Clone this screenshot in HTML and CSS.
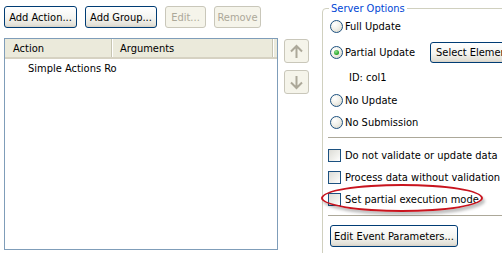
FILE: index.html
```html
<!DOCTYPE html>
<html lang="en">
<head>
  <meta charset="UTF-8" />
  <title>Event Actions</title>
  <link rel="stylesheet" href="styles.css">
</head>
<body>
  <div class="dialog">
    <div class="actions">
      <div class="toolbar">
        <button class="btn w-add">Add Action...</button>
        <button class="btn w-group">Add Group...</button>
        <button class="btn w-edit" disabled>Edit...</button>
        <button class="btn w-remove" disabled>Remove</button>
      </div>
      <div class="table">
        <div class="thead">
          <div class="th col-action">Action</div>
          <div class="th col-args">Arguments</div>
        </div>
        <div class="tr">
          <div class="td col-action"><span class="indent">Simple Actions Ro</span></div>
          <div class="td col-args"></div>
        </div>
      </div>
    </div>

    <div class="movers">
      <button class="btn arrow" disabled>
        <svg width="15" height="15" viewBox="0 0 15 15"><path d="M7.5 14V2M2 7.5L7.5 2L13 7.5" fill="none" stroke="#aca899" stroke-width="2"/></svg>
      </button>
      <button class="btn arrow" disabled>
        <svg width="15" height="15" viewBox="0 0 15 15"><path d="M7.5 1V13M2 7.5L7.5 13L13 7.5" fill="none" stroke="#aca899" stroke-width="2"/></svg>
      </button>
    </div>

    <fieldset class="server">
      <legend>Server Options</legend>
      <div class="opt first"><span class="radio"></span>Full Update</div>
      <div class="opt partial"><span class="radio checked"></span>Partial Update<button class="btn select">Select Elemen</button></div>
      <div class="id-row">ID: col1</div>
      <div class="opt"><span class="radio"></span>No Update</div>
      <div class="opt"><span class="radio"></span>No Submission</div>
      <div class="sep"></div>
      <div class="chk first-chk"><span class="box"></span>Do not validate or update data</div>
      <div class="chk"><span class="box"></span>Process data without validation</div>
      <div class="chk marked"><span class="box"></span>Set partial execution mode<span class="ring"></span></div>
      <div class="sep second"></div>
      <button class="btn params">Edit Event Parameters...</button>
    </fieldset>
  </div>
</body>
</html>
```

FILE: styles.css
```css
body {
  margin: 0;
  background: #fff;
  font-family: 'DejaVu Sans Condensed', 'Liberation Sans', sans-serif;
  font-size: 11px;
  color: #000;
  overflow: hidden;
}
.dialog {
  display: flex;
  width: 502px;
  height: 253px;
  padding-left: 4px;
  overflow: hidden;
}
.actions {
  width: 274px;
  padding-top: 6px;
  flex-shrink: 0;
}
.toolbar {
  display: flex;
  gap: 8px;
  height: 22px;
}
.btn {
  font: inherit;
  color: #000;
  height: 22px;
  padding: 0;
  border: 1px solid #003c74;
  border-radius: 3px;
  background: linear-gradient(#ffffff, #f4f4f0 55%, #e3e1d8 90%, #d6d0c5);
  white-space: nowrap;
}
.btn:disabled {
  color: #aca899;
  border-color: #c9c7ba;
  background: #f5f4ea;
}
.w-add { width: 73px; }
.w-group { width: 72px; }
.w-edit { width: 41px; }
.w-remove { width: 47px; }

.table {
  margin-top: 10px;
  height: 212px;
  border: 1px solid #7f9db9;
  box-sizing: border-box;
  background: #fff;
}
.thead {
  display: flex;
  height: 20px;
  background: #ebeadb;
  border-bottom: 2px solid #d6d2c2;
  box-sizing: border-box;
}
.th {
  display: flex;
  align-items: center;
  padding-left: 8px;
  box-sizing: border-box;
  border-right: 1px solid #c7c5b2;
  box-shadow: 1px 0 0 #fff;
}
.col-action { width: 107px; }
.col-args { width: 161px; }
.tr {
  display: flex;
  height: 17px;
  margin-top: 1px;
}
.td {
  display: flex;
  align-items: center;
  white-space: nowrap;
}
.indent { padding-left: 23px; }

.movers {
  display: flex;
  flex-direction: column;
  gap: 7px;
  margin-left: 6px;
  padding-top: 39px;
  flex-shrink: 0;
}
.arrow {
  width: 25px;
  height: 24px;
  display: flex;
  align-items: center;
  justify-content: center;
}

.server {
  position: relative;
  margin: 2px 0 0 13px;
  padding: 0 0 0 6px;
  width: 200px;
  height: 270px;
  flex-shrink: 0;
  border: 1px solid #d0d0bf;
  border-radius: 4px 0 0 0;
  box-sizing: border-box;
}
.server legend {
  padding: 0 2px;
  line-height: 13px;
  color: #0046d5;
}
.opt, .chk {
  display: flex;
  align-items: center;
  height: 22px;
  white-space: nowrap;
}
.opt.first { margin-top: 0; }
.opt.partial { margin-top: 4px; }
.radio {
  width: 13px;
  height: 13px;
  margin: 0 2px 0 1px;
  border: 1px solid #1c5180;
  border-radius: 50%;
  box-sizing: border-box;
  background: radial-gradient(circle at 35% 30%, #ffffff, #f2f1ea 45%, #d4d2c6 100%);
  display: flex;
  align-items: center;
  justify-content: center;
}
.radio.checked::after {
  content: "";
  width: 5px;
  height: 5px;
  border-radius: 50%;
  background: radial-gradient(circle at 40% 35%, #8fe28f, #21a121 70%);
}
.select {
  margin-left: 15px;
  height: 21px;
  width: 100px;
  padding-left: 5px;
  text-align: left;
}
.id-row {
  height: 16px;
  line-height: 16px;
  margin-top: 7px;
  padding-left: 20px;
}
.id-row + .opt { margin-top: 3px; }
.sep {
  height: 1px;
  margin: 4px 0 0 -1px;
  background: #aca899;
}
.sep.second { margin-top: 5px; }
.chk.first-chk { margin-top: 6px; }
.box {
  width: 13px;
  height: 13px;
  margin: 0 4px 0 -1px;
  border: 1px solid #1c5180;
  box-sizing: border-box;
  background: linear-gradient(135deg, #dcdcd7, #f0f0ec 60%, #ffffff);
}
.marked { position: relative; }
.ring {
  position: absolute;
  left: -8px;
  top: -4px;
  width: 162px;
  height: 28px;
  border: 2px solid #c8141e;
  border-radius: 50%;
  box-sizing: border-box;
  box-shadow: 2px 3px 3px rgba(0, 0, 0, 0.25);
}
.params {
  display: block;
  margin: 9px 0 0 1px;
  width: 128px;
  height: 22px;
}
```
